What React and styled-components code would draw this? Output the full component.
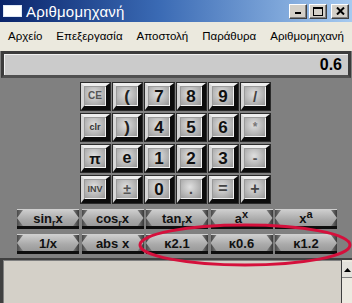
import React from "react";
import styled, { createGlobalStyle } from "styled-components";

const Global = createGlobalStyle`
  html, body {
    margin: 0;
    padding: 0;
    width: 352px;
    height: 303px;
    overflow: hidden;
    background: #808080;
    font-family: "Liberation Sans", Arial, sans-serif;
  }
`;

const Window = styled.div`
  position: relative;
  width: 352px;
  height: 303px;
  display: flex;
  flex-direction: column;
  background: #808080;
  overflow: hidden;
`;

const TitleBar = styled.div`
  height: 22px;
  flex: none;
  display: flex;
  align-items: center;
  padding: 0 3px;
  background: linear-gradient(to right, #0a246a, #3a6ab4 45%, #a6caf0);
  color: #fff;
`;

const AppIcon = styled.div`
  width: 19px;
  height: 12px;
  background: #fff;
  border: 1px solid #dfe8f6;
  margin-right: 4px;
  box-sizing: border-box;
`;

const Title = styled.div`
  flex: 1;
  font-size: 15px;
  letter-spacing: 0.2px;
`;

const CaptionButtons = styled.div`
  display: flex;
  gap: 2px;
`;

const CaptionBtn = styled.div`
  width: 18px;
  height: 15px;
  box-sizing: border-box;
  background: #d4d0c8;
  border-top: 1px solid #fff;
  border-left: 1px solid #fff;
  border-right: 1px solid #404040;
  border-bottom: 1px solid #404040;
  box-shadow: inset -1px -1px 0 #808080;
  margin-left: ${(p) => (p.$gap ? "2px" : "0")};
  display: flex;
  align-items: center;
  justify-content: center;
`;

const MenuBar = styled.div`
  height: 29px;
  flex: none;
  display: flex;
  align-items: center;
  background: #ebe9de;
  padding-left: 8px;
  gap: 14px;
  font-size: 11.5px;
  color: #000;
  box-sizing: border-box;
  padding-bottom: 2px;
  white-space: nowrap;
`;

const Display = styled.div`
  height: 27px;
  flex: none;
  margin: 0 1px;
  box-sizing: border-box;
  border: 3px solid #3c3c3c;
  border-bottom-color: #505050;
  background: #cbcbcb;
  box-shadow: inset 1px 1px 0 #f0f0f0;
  display: flex;
  align-items: center;
  justify-content: flex-end;
  padding-right: 6px;
  font-size: 16px;
  font-weight: bold;
  color: #000;
`;

const Panel = styled.div`
  flex: none;
  height: 180px;
  box-sizing: border-box;
  padding-top: 5px;
  display: flex;
  flex-direction: column;
  gap: 6px;
`;

const Keypad = styled.div`
  margin-left: 81px;
  display: grid;
  grid-template-columns: repeat(6, 29px);
  grid-auto-rows: 27px;
  column-gap: 3px;
  row-gap: 4px;
`;

const Key = styled.div`
  box-sizing: border-box;
  border-top: 3px solid #eeeeee;
  border-left: 3px solid #d6d6d6;
  border-right: 4px solid #0c0c0c;
  border-bottom: 4px solid #0c0c0c;
  outline: 1px solid #2a2a2a;
  background: radial-gradient(circle at 45% 40%, #e0e0e0, #b4b4b4 55%, #8e8e8e);
  box-shadow: inset 1px 1px 0 #9a9a9a, inset -1px -1px 0 #f0f0f0;
  display: flex;
  align-items: center;
  justify-content: center;
  font-weight: bold;
  font-size: ${(p) => p.$size || 17}px;
  color: ${(p) => p.$color || "#111"};
  line-height: 1;
`;

const FuncGrid = styled.div`
  margin-left: 17px;
  display: grid;
  grid-template-columns: repeat(5, 62px);
  grid-auto-rows: 20px;
  column-gap: 2.5px;
  row-gap: 5px;
`;

const FuncKey = styled.div`
  box-sizing: border-box;
  background: linear-gradient(to right, #4a4a4a, #8c8c8c 12%, #8c8c8c 88%, #3a3a3a);
  border-top: 1px solid #cfcfcf;
  border-bottom: 3px solid #0e0e0e;
  display: flex;
`;

const FuncFace = styled.div`
  flex: 1;
  clip-path: polygon(6px 0, calc(100% - 6px) 0, 100% 50%, calc(100% - 6px) 100%, 6px 100%, 0 50%);
  background: linear-gradient(to bottom, #cdcdcd, #a9a9a9 60%, #9a9a9a);
  display: flex;
  align-items: center;
  justify-content: center;
`;

const FuncLabel = styled.span`
  font-weight: bold;
  font-size: 13px;
  color: #111;
  line-height: 1;
  white-space: nowrap;
`;

const Sub = styled.span`
  font-size: 9px;
  position: relative;
  top: 3px;
`;

const Sup = styled.span`
  font-size: 11px;
  position: relative;
  top: -5px;
`;

const Output = styled.div`
  flex: 1;
  display: flex;
  border-top: 2px solid #404040;
  border-left: 3px solid #404040;
`;

const OutputText = styled.div`
  flex: 1;
  background: #d4d0c8;
  box-shadow: inset 1px 1px 0 #808080;
`;

const Scrollbar = styled.div`
  width: 10px;
  background: #ece9e0;
  border-left: 1px solid #404040;
  display: flex;
  flex-direction: column;
`;

const ScrollUp = styled.div`
  height: 15px;
  margin-top: 2px;
  background: #e4e2dc;
  border-bottom: 1px solid #808080;
  display: flex;
  align-items: center;
  justify-content: center;
`;

const Ring = styled.svg`
  position: absolute;
  left: 0;
  top: 0;
  pointer-events: none;
`;

const keys = [
  ["CE", 10, "#555"], ["(", 17, "#222"], ["7"], ["8"], ["9"], ["/", 15, "#444"],
  ["clr", 9, "#333"], [")", 17, "#222"], ["4"], ["5"], ["6"], ["*", 12, "#777"],
  ["π", 15, "#111"], ["e", 16, "#111"], ["1"], ["2"], ["3"], ["-", 14, "#555"],
  ["INV", 9, "#444"], ["±", 14, "#555"], ["0"], [".", 14, "#444"], ["=", 16, "#444"], ["+", 16, "#444"],
];

const menu = ["Αρχείο", "Επεξεργασία", "Αποστολή", "Παράθυρα", "Αριθμομηχανή"];

export default function App() {
  return (
    <Window>
      <Global />
      <TitleBar>
        <AppIcon />
        <Title>Αριθμομηχανή</Title>
        <CaptionButtons>
          <CaptionBtn>
            <svg width="8" height="8"><rect x="1" y="5" width="6" height="2" fill="#000" /></svg>
          </CaptionBtn>
          <CaptionBtn>
            <svg width="10" height="9"><rect x="0.5" y="0.5" width="9" height="8" fill="none" stroke="#000" /><rect x="0" y="0" width="10" height="2" fill="#000" /></svg>
          </CaptionBtn>
          <CaptionBtn $gap>
            <svg width="9" height="8"><path d="M1 0.5 L8 7.5 M8 0.5 L1 7.5" stroke="#000" strokeWidth="2" /></svg>
          </CaptionBtn>
        </CaptionButtons>
      </TitleBar>
      <MenuBar>
        {menu.map((m) => (
          <span key={m}>{m}</span>
        ))}
      </MenuBar>
      <Display>0.6</Display>
      <Panel>
        <Keypad>
          {keys.map(([label, size, color], i) => (
            <Key key={i} $size={size} $color={color}>{label}</Key>
          ))}
        </Keypad>
        <FuncGrid>
          <FuncKey><FuncFace><FuncLabel>sin<Sub>r</Sub>x</FuncLabel></FuncFace></FuncKey>
          <FuncKey><FuncFace><FuncLabel>cos<Sub>r</Sub>x</FuncLabel></FuncFace></FuncKey>
          <FuncKey><FuncFace><FuncLabel>tan<Sub>r</Sub>x</FuncLabel></FuncFace></FuncKey>
          <FuncKey><FuncFace><FuncLabel>a<Sup>x</Sup></FuncLabel></FuncFace></FuncKey>
          <FuncKey><FuncFace><FuncLabel>x<Sup>a</Sup></FuncLabel></FuncFace></FuncKey>
          <FuncKey><FuncFace><FuncLabel>1/x</FuncLabel></FuncFace></FuncKey>
          <FuncKey><FuncFace><FuncLabel>abs x</FuncLabel></FuncFace></FuncKey>
          <FuncKey><FuncFace><FuncLabel>κ2.1</FuncLabel></FuncFace></FuncKey>
          <FuncKey><FuncFace><FuncLabel>κ0.6</FuncLabel></FuncFace></FuncKey>
          <FuncKey><FuncFace><FuncLabel>κ1.2</FuncLabel></FuncFace></FuncKey>
        </FuncGrid>
      </Panel>
      <Output>
        <OutputText />
        <Scrollbar>
          <ScrollUp>
            <svg width="7" height="4"><path d="M0 4 L3.5 0 L7 4 Z" fill="#000" /></svg>
          </ScrollUp>
        </Scrollbar>
      </Output>
      <Ring width="352" height="303">
        <ellipse cx="245" cy="245" rx="105" ry="20" fill="none" stroke="#d5103c" strokeWidth="3" />
      </Ring>
    </Window>
  );
}
